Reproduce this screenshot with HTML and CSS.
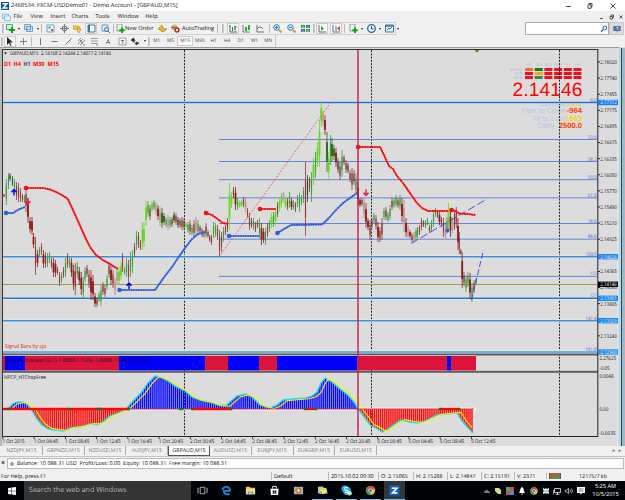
FILE: index.html
```html
<!DOCTYPE html>
<html lang="en">
<head>
  <meta charset="UTF-8">
  <title>2468534: FXCM-USDDemo01 - Demo Account - [GBPAUD,M15]</title>
  <link rel="stylesheet" href="styles.css">
</head>
<body>
  <header class="titlebar">
    <svg class="logo" viewBox="0 0 8 8"><rect width="8" height="8" fill="#0c4da2"/><path d="M1.5 1.8h4.5L2 6h4.7" fill="none" stroke="#fff" stroke-width="1.4"/></svg>
    <span class="title">2468534: FXCM-USDDemo01 - Demo Account - [GBPAUD,M15]</span>
    <svg class="win-controls" viewBox="0 0 50 10"><path d="M0 5.5h5M22 3.8h3v3.5h-3zM23 3.5v-1h3v3.5h-1M44.5 2.5l5 5m0-5l-5 5" fill="none" stroke="#222" stroke-width=".8"/></svg>
  </header>

  <nav class="menubar">
    <svg class="menu-icon" viewBox="0 0 9 8"><rect x=".5" y="1" width="6" height="4.5" fill="#d5ebfa" stroke="#6cabdc" stroke-width=".7"/><rect x="2.5" y="3" width="6" height="4.5" fill="#e9f5fd" stroke="#6cabdc" stroke-width=".7"/></svg>
    <span>File</span><span>View</span><span>Insert</span><span>Charts</span><span>Tools</span><span>Window</span><span>Help</span>
    <svg class="mdi" viewBox="0 0 26 8"><path d="M1 5.5h3M11 3.5h2.5v2.5H11zM12 3.3V2h2.5v2.5h-.8M20.5 2.5l3 3m0-3l-3 3" fill="none" stroke="#444" stroke-width=".9"/></svg>
  </nav>

  <div class="toolbar toolbar-main">
    <div class="tools standard" id="standard"></div>
    <div class="search"><svg viewBox="0 0 8 8"><circle cx="4.8" cy="3" r="2" fill="#e4f0ff" stroke="#3465b5"/><path d="M3.3 4.5L1 7" stroke="#3465b5" stroke-width="1.2"/></svg></div>
    <div class="chat"><svg viewBox="0 0 8 8"><path d="M.3 1h7.4v5H5L3.600 7.600V6H.3z" fill="#5573a8"/><path d="M3.300 2.200h1.400v2.600" stroke="#fff" fill="none" stroke-width=".7"/></svg></div>
  </div>

  <div class="toolbar toolbar-line">
    <div class="tools drawing" id="drawing"></div>
    <div class="periods"><span>M1</span><span>M5</span><span class="on">M15</span><span>M30</span><span>H1</span><span>H4</span><span>D1</span><span>W1</span><span>MN</span></div>
  </div>

  <main class="chart"><svg id="chart" viewBox="0 47 625 399"></svg></main>

  <div class="tabs">
    <span>NZDJPY,M15</span><span>GBPNZD,M15</span><span>NZDUSD,M15</span><span>AUDJPY,M15</span><span class="active">GBPAUD,M15</span><span>AUDUSD,M15</span><span>EURJPY,M15</span><span>EURGBP,M15</span><span>EURUSD,M15</span>
    <i class="tab-scroll">◂&nbsp;&nbsp;&nbsp;▸</i>
  </div>

  <div class="terminal">
    <b>×</b>
    <div class="balance"><i></i><span>Balance: 10 088.31 USD&nbsp; Profit/Loss: 0.00&nbsp; Equity: 10 088.31&nbsp; Free margin: 10 088.31</span></div>
  </div>

  <footer class="status">
    <span>For Help, press F1</span><span>Default</span><span>2015.10.02 09:30</span><span>O: 2.15065</span><span>H: 2.15266</span><span>L: 2.14847</span><span>C: 2.15191</span><span>V: 2371</span>
    <span class="conn"><svg viewBox="0 0 12 6"><path d="M0 0h12v6H0z" fill="#397a2e"/><path d="M0 0h12v2L6 3 0 5z" fill="#a33b2c"/><path d="M2 0v6M4 0v6M6 0v6M8 0v6M10 0v6" stroke="#dfe5d5" stroke-width=".4"/></svg></span>
    <span class="traffic">12175/7 kb</span>
  </footer>

  <div class="taskbar">
    <div class="start"><svg viewBox="0 0 8 8"><path d="M0 1.2L3.5.6v3.1H0zM4 .5L8 0v3.7H4zM0 4.2h3.5v3.2L0 6.900zM4 4.200h4V8l-4-.6z" fill="#fff"/></svg></div>
    <div class="cortana">Search the web and Windows</div>
    <div class="apps">
      <div><svg viewBox="0 0 12 12"><path d="M3.5 2.5h5v7h-5zM2 3.5H1v5h1M10 3.5h1v5h-1" fill="none" stroke="#ddd" stroke-width=".8"/></svg></div>
      <div><svg viewBox="0 0 12 12"><path d="M2.5 6.400h7.200C9.800 3.600 8.200 2 6 2 3.700 2 2 3.300 1.600 5.700M3 6.500c0 4 4.500 4.300 6.300 3" fill="none" stroke="#1b87e0" stroke-width="2"/></svg></div>
      <div><svg viewBox="0 0 12 12"><path d="M1 2h4l1 1h5v7H1z" fill="#f4c95a"/><path d="M1 5h10v5H1z" fill="#fde49a"/><path d="M3 7h6v3H7.500V8.500h-3V10H3z" fill="#4ba7dc"/></svg></div>
      <div><svg viewBox="0 0 12 12"><path d="M1.500 4h9l-.6 7H2.100z" fill="#fff"/><path d="M4 4V1.500h4V4" fill="none" stroke="#fff"/><path d="M4 6h1.800v1.500H4zM6.200 6H8v1.500H6.200zM4 8h1.800v1.500H4zM6.200 8H8v1.500H6.200z" fill="#111"/></svg></div>
      <div><svg viewBox="0 0 12 12"><rect x="1" y="2" width="10" height="8" rx="1" fill="#91b9d6"/><circle cx="6" cy="6" r="3.400" fill="#ef6c18"/><path d="M5 4l3 2-3 2z" fill="#fff"/></svg></div>
      <div class="run"><svg viewBox="0 0 12 12"><path d="M1 2l6-.5.5 5.500-6 1z" fill="#b8d98b"/><path d="M4 4l6-1 1.500 6-6 1z" fill="#f1df79"/><path d="M1 6l4 1v3L1 9z" fill="#97c4df"/></svg></div>
      <div class="run"><svg viewBox="0 0 12 12"><circle cx="4" cy="4" r="3.500" fill="#18aee8"/><circle cx="6.500" cy="6.500" r="4.500" fill="#18aee8"/><path d="M8 3.600C5-.1 2 5.100 5.500 5.600s2.500 3.600-1.300 2" fill="none" stroke="#fff" stroke-width="1.200"/><circle cx="9.300" cy="9" r="2.500" fill="#cce8b7"/></svg></div>
      <div class="run"><svg viewBox="0 0 12 12"><circle cx="6" cy="6" r="5" fill="#f0c32c"/><path d="M6 6L1.700 3.500a5 5 0 0 1 8.900.5z" fill="#db4437"/><path d="M6 6l.2 5A5 5 0 0 1 1.600 3.600z" fill="#2b9b4d"/><circle cx="6" cy="6" r="2.300" fill="#fff"/><circle cx="6" cy="6" r="1.700" fill="#3c7de0"/></svg></div>
      <div class="run current"><svg viewBox="0 0 12 12"><rect x=".5" y=".5" width="11" height="11" fill="#1261c0"/><path d="M3 3.500h5.500L3.800 8.600H9" fill="none" stroke="#fff" stroke-width="1.800"/></svg></div>
    </div>
    <div class="tray">
      <svg viewBox="0 0 8 8"><path d="M1 6h6V4.500L5 4 4 2.500 2.500 3.500 1 4.500z" fill="#777"/></svg>
      <svg viewBox="0 0 8 8"><path d="M1 1h4l2 2v4H4L1 4z" fill="#c4e58c"/></svg>
      <svg viewBox="0 0 8 8"><path d="M0 0h4v4H0z" fill="#4b9f68"/><path d="M4 0h4v4H4z" fill="#d9483f"/><path d="M0 4h4v4H0z" fill="#b15b49"/><path d="M4 4h4v4H4z" fill="#438edb"/></svg>
      <svg viewBox="0 0 8 8"><path d="M4 0C2 1 2.500 4 1 6h6C5.500 4 6 1 4 0zM3 6.500h2L4 8z" fill="#fff"/></svg>
      <svg viewBox="0 0 8 8"><circle cx="4" cy="4" r="3.700" fill="#efc22a"/><path d="M4 4L.8 2a3.700 3.700 0 0 1 6.500.4z" fill="#db4437"/><path d="M4 4v3.700A3.700 3.700 0 0 1 .8 2z" fill="#2b9b4d"/><circle cx="4" cy="4" r="1.600" fill="#3c7de0" stroke="#fff" stroke-width=".5"/></svg>
      <svg viewBox="0 0 8 8"><path d="M1 1l2 1 1-1 1 1 2-1v2L6 4l1 1v2L5 6 4 7 3 6 1 7V5l1-1-1-1z" fill="#e9f6ee"/><path d="M2.500 4h3" stroke="#26a467"/></svg>
      <svg viewBox="0 0 8 8"><path d="M1.500 1.500h6v4h-6zM4.500 5.500v2M2.500 7.300h4M.3 3v4.500" fill="none" stroke="#eee" stroke-width=".8"/></svg>
      <svg viewBox="0 0 8 8"><path d="M.5 3h1.300L3.500 1.500v5L1.800 5H.5zM5 2.500q1 1.500 0 3M6.500 1.500q2 2.500 0 5" fill="none" stroke="#ddd" stroke-width=".7"/></svg>
      <svg viewBox="0 0 8 8"><path d="M0 0h8v6H5L3.500 8V6H0z" fill="#fff"/><path d="M1.500 2h5M1.500 4h5" stroke="#333" stroke-width=".7"/></svg>
    </div>
    <div class="clock"><span>5:25 AM</span><span>10/5/2015</span></div>
  </div>
  <script src="chart.js"></script>
</body>
</html>
```

FILE: styles.css
```css
* { box-sizing: border-box; }
body {
  margin: 0;
  width: 625px;
  height: 500px;
  overflow: hidden;
  display: flex;
  flex-direction: column;
  background: #f0f0f0;
  color: #111;
  font-family: "Open Sans", "Noto Sans", sans-serif;
  font-size: 5.6px;
  line-height: 1;
  white-space: nowrap;
  text-rendering: geometricPrecision;
}
svg { display: block; }

.titlebar {
  height: 11px;
  display: flex;
  align-items: center;
  background: #fff;
  padding: 0 9px 0 1px;
}
.logo { width: 8px; height: 8px; margin-right: 2px; }
.title { font-size: 5.75px; color: #222; }
.win-controls { width: 50px; height: 10px; margin-left: auto; }

.menubar {
  height: 11px;
  display: flex;
  align-items: center;
  padding-left: 2px;
}
.menubar span { flex: none; }
.menubar span:nth-of-type(1) { width: 17px; }
.menubar span:nth-of-type(2) { width: 20px; }
.menubar span:nth-of-type(3) { width: 21px; }
.menubar span:nth-of-type(4) { width: 24px; }
.menubar span:nth-of-type(5) { width: 22px; }
.menubar span:nth-of-type(6) { width: 28px; }
.menu-icon { width: 9px; height: 8px; margin-right: 2.5px; }
.mdi { width: 26px; height: 8px; margin-left: auto; }

.toolbar { display: flex; align-items: stretch; }
.toolbar-main { height: 13px; padding-right: 1px; }
.toolbar-line { height: 12px; }
.tools { display: grid; align-items: center; justify-items: center; border: 1px solid #d2d2d2; border-left: 0; }
.tools svg { width: 9px; height: 9px; }
.tools .pressed { background: #f9f9f9; border: 1px solid #ccc; width: 12px; height: 11px; display: grid; place-items: center; }
.tools .label { justify-self: start; }
.tools .sep { width: 1px; height: 9px; background: #bbb; }
.tools .grip { width: 2px; height: 9px; border-left: 1px solid #bbb; border-right: 1px solid #ccc; }
.tools .drop { border: 1.5px solid transparent; border-top: 2px solid #222; border-bottom: 0; }
.standard {
  width: 396px;
  grid-template-columns: 5px 11px 5px 14px 5px 3px 14px 14px 13px 14px 14px 3px 10px 31px 13px 13px 34px 3px 7px 14px 13px 15px 3px 13px 14px 14px 3px 14px 14px 3px 14px 4px 14px 4px 14px 4px;
}
.search {
  width: 84px;
  margin-left: 129px;
  background: #fff;
  border: 1px solid #aaa;
  display: flex;
  align-items: center;
  justify-content: flex-end;
}
.search svg { width: 8px; height: 8px; }
.chat { flex: 1; display: grid; place-items: center; background: #dcdcdc; border: 1px solid #c8c8c8; }
.chat svg { width: 8px; height: 8px; }
.drawing {
  width: 150px;
  border: 0;
  grid-template-columns: 3px 13px 14px 3px 14px 14px 14px 13px 13px 14px 14px 13px 5px 3px;
}
.periods { display: flex; align-items: center; width: 126px; border-right: 1px solid #c5c5c5; font-size: 4.8px; color: #444; }
.periods span { flex: 1; text-align: center; }
.periods .on { background: #fafafa; border: 1px solid #ccc; padding: 2px 0; }

.chart { height: 399px; flex: none; }
.chart svg { width: 625px; height: 399px; }

.tabs { height: 10px; display: flex; align-items: flex-start; padding: 0 4px 0 1px; color: #777; font-size: 5.2px; }
.tabs span { height: 9px; width: 41.8px; flex: none; display: grid; place-items: center; border-right: 1px solid #aaa; }
.tabs .active { height: 10px; background: #fff; color: #111; border: 1px solid #555; border-top: 0; }
.tab-scroll { margin-left: auto; font-style: normal; line-height: 8px; }

.terminal { height: 14px; display: flex; align-items: center; padding: 1px; border-top: 1px solid #c5c5c5; }
.terminal b { width: 6px; font-size: 7px; }
.balance { flex: 1; height: 11px; display: flex; align-items: center; background: #fff; border: 1px solid #bbb; padding-left: 2px; font-size: 5.45px; }
.balance i { width: 4px; height: 4px; margin-right: 3px; border: 1px solid #888; border-radius: 50%; background: #ccc; }

.status { height: 11px; display: flex; align-items: center; padding-left: 1px; background: #f0f0f0; font-size: 5.4px; }
.status span { flex: none; border-left: 1px solid #bbb; padding-left: 2px; line-height: 8px; }
.status span:nth-child(1) { width: 270px; border: 0; padding-left: 0; }
.status span:nth-child(2) { width: 57px; }
.status span:nth-child(3) { width: 50px; }
.status span:nth-child(4) { width: 35px; }
.status span:nth-child(5), .status span:nth-child(6) { width: 34px; }
.status span:nth-child(7) { width: 33px; }
.status span:nth-child(8) { width: 32px; }
.conn { width: 31px; }
.conn svg { width: 12px; height: 6px; }
.status .traffic { border: 0; }

.taskbar { height: 19px; display: flex; background: #000407; color: #fff; }
.start { width: 24px; display: grid; place-items: center; }
.start svg { width: 8px; height: 8px; }
.cortana { width: 167px; background: #343434; color: #b4b4b4; font-size: 7.1px; line-height: 18px; padding-left: 5px; }
.apps { display: flex; gap: 3px; padding-left: 1px; }
.apps div { width: 21px; display: grid; place-items: center; border-bottom: 1px solid transparent; }
.apps svg { width: 11px; height: 11px; }
.apps .run { border-bottom-color: #78bbea; }
.apps .current { background: #30363b; }
.tray { display: flex; align-items: center; gap: 3.8px; margin-left: auto; }
.tray svg { width: 8px; height: 8px; }
.clock { width: 39px; display: flex; flex-direction: column; align-items: center; justify-content: center; gap: 2px; margin-left: 1px; font-size: 5.6px; }

#chart text { font-family: "Open Sans", "Noto Sans", sans-serif; font-size: 5.3px; fill: #111; }
#chart .axis { font-size: 5.2px; }
#chart .fib { fill: #4a66cf; font-size: 5px; }
#chart .tf { fill: #f00; font-size: 6px; font-weight: 700; }
#chart .info { fill: #b4c6de; font: 7.6px "Liberation Sans", sans-serif; }
#chart .val { font-weight: 700; }
#chart .head { fill: #a9bad1; font-size: 4.2px; }
#chart .big { fill: #f00; font: 19.2px "Liberation Sans", sans-serif; }
```

FILE: chart.js
```js
// small toolbar icons, 9x9
const art = {
  add: '<path d="M.5.5h6v5h-6z" fill="#d6eed2" stroke="#4a9"/><path d="M6 3v6M3 6h6" stroke="#0aa51c" stroke-width="2"/>',
  profile: '<path d="M.5.5h6v5h-6zM2.5 2.5h6v5h-6z" fill="#cfe0ee" stroke="#5d8fb8" stroke-width=".8"/>',
  watch: '<path d="M1 1h7v7H1z" fill="#eef8ff" stroke="#6aa0cc"/><path d="M2.5 3.5h2" stroke="#1a3" stroke-width="2"/><path d="M5 6h2" stroke="#d43" stroke-width="2"/>',
  target: '<circle cx="4.5" cy="4.5" r="2.5" fill="none" stroke="#666"/><path d="M4.5 0v9M0 4.5h9" stroke="#666" stroke-width=".8"/>',
  folder: '<path d="M.5 1.5h3l.5 1h3v3h-6.5z" fill="#f2c94c" stroke="#b98b18" stroke-width=".5"/><path d="M4 3l1.5 2 3 .5-2 1.5.3 2L4.5 8z" fill="#f8d84e" stroke="#a98013" stroke-width=".5"/>',
  nav: '<path d="M1 1h7v7H1z" fill="#fff" stroke="#3277ad"/><path d="M1 1h2v7H1z" fill="#3277ad"/>',
  tester: '<path d="M1 1h6v6H1z" fill="#e4f1fb" stroke="#6896bd"/><circle cx="5.5" cy="5.5" r="2" fill="#cae4fa" stroke="#476fa2"/><path d="M7 7l2 2" stroke="#476fa2"/>',
  order: '<path d="M1 0h5v7H1z" fill="#f3f7ef" stroke="#777" stroke-width=".7"/><path d="M6 3.5V9M3.2 6.2h5.6" stroke="#0aa51c" stroke-width="2"/>',
  meta: '<path d="M0 5l4-4 1.5 3.5L9 5 5 8z" fill="#e7b52f" stroke="#ac7b15" stroke-width=".6"/>',
  auto: '<circle cx="3.5" cy="3.5" r="3" fill="#edb53b"/><path d="M0 3.5h6" stroke="#467cbc" stroke-width="1.5"/><circle cx="6" cy="6" r="2.7" fill="#d42b20"/><path d="M5 5h2v2H5z" fill="#fff"/>',
  bars: '<path d="M1 1v7h7M1 2l-1 1M3.5 3v4M6 1.5v5M6 3h1.5" fill="none" stroke="#4c6b55"/><path d="M6 2v4" stroke="#18a32c"/>',
  candle: '<path d="M1 1v7h7" fill="none" stroke="#67816c"/><path d="M3 3h2v4H3zM6 1h2v5H6z" fill="#1db237"/>',
  line: '<path d="M1 1v7h7M1 5q3-4 6 0" fill="none" stroke="#587767"/>',
  zin: '<circle cx="3.5" cy="3.5" r="2.8" fill="#e2f1ff" stroke="#2977b9"/><path d="M2 3.5h3M3.5 2v3" stroke="#2b75ba"/><path d="M6 6l2.5 2.5" stroke="#c99b25" stroke-width="2"/>',
  zout: '<circle cx="3.5" cy="3.5" r="2.8" fill="#e2f1ff" stroke="#2977b9"/><path d="M2 3.5h3" stroke="#2b75ba"/><path d="M6 6l2.5 2.5" stroke="#c99b25" stroke-width="2"/>',
  tile: '<path d="M0 1h4v3H0zM5 5h4v3H5z" fill="#3aa33a"/><path d="M5 1h4v3H5zM0 5h4v3H0z" fill="#3768a9"/><path d="M1 3h2M6 3h2M1 7h2M6 7h2" stroke="#fff" stroke-width=".7"/>',
  scroll: '<path d="M1 1v7h7" fill="none" stroke="#666"/><path d="M3 2l3 2.5L3 7z" fill="#2ca23b"/>',
  shift: '<path d="M1 1v7h7M4 2v5" fill="none" stroke="#5b7b78"/><path d="M8 2L5 4.5 8 7z" fill="#c54b35"/>',
  clock: '<circle cx="4.5" cy="4.5" r="3.8" fill="#f5faff" stroke="#2267b4" stroke-width="1.3"/><path d="M4.5 2v3h2" fill="none" stroke="#446"/>',
  template: '<path d="M.5 1h8v7h-8z" fill="#e8f4ff" stroke="#3b73a7"/><path d="M.5 2h8" stroke="#3b73a7" stroke-width="1.5"/><path d="M2 6l2-2 1 1 2-2" fill="none" stroke="#299a4d"/>',
  cursor: '<path d="M2 0v8l2-2 1.5 3 1-.5L5 5.5h3z" fill="#222"/>',
  cross: '<path d="M4.5 1v7M1 4.5h7" stroke="#666" stroke-width=".8"/>',
  vert: '<path d="M4.5 1v7" stroke="#555" stroke-width=".8"/>',
  horz: '<path d="M1.5 4.5h6" stroke="#555" stroke-width=".8"/>',
  trend: '<path d="M1.5 7.5l6-6" stroke="#555" stroke-width=".8"/>',
  channel: '<path d="M1 7l5-5M3 8l5-5M1 4l3-3M3 3l3 4M6 8h2" stroke="#555" stroke-width=".7"/>',
  fibo: '<path d="M1 1.5h7M1 4h7M1 6.5h6M7 6v3" stroke="#777" stroke-width=".7"/>',
  textA: '<text x="2" y="7" font-size="6.5" fill="#333">A</text>',
  textT: '<path d="M1 1h7v7H1z" fill="none" stroke="#888" stroke-width=".7"/><text x="2.9" y="6.6" font-size="5.5" fill="#222">T</text>',
  shapes: '<path d="M0 3l2.5-2L4 3.5 2.5 5zM5 5l3 1-3 2zM3 5l2 2" fill="#333" stroke="#333" stroke-width=".7"/>'
};

function fillTools(id, list) {
  document.getElementById(id).innerHTML = list.split(' ').map(n => {
    if (['grip', 'sep', 'drop'].includes(n)) return `<i class="${n}"></i>`;
    if (n === 'new') return '<span class="label">New Order</span>';
    if (n === 'trading') return '<span class="label">AutoTrading</span>';
    const on = n[0] === '*';
    return `<span class="${on ? 'pressed' : ''}"><svg viewBox="0 0 9 9">${art[n.replace('*', '')]}</svg></span>`;
  }).join('');
}
fillTools('standard', 'grip add drop profile drop sep watch target folder *nav tester sep order new meta auto trading sep grip *bars candle line sep zin zout tile grip *scroll *shift sep order drop clock drop template drop');
fillTools('drawing', 'grip *cursor cross sep vert horz trend channel fibo textA textT shapes drop grip');

let out = '';
const rect = (x, y, w, h, c) => { out += `<rect x="${x}" y="${y}" width="${w}" height="${h}" fill="${c}"/>`; };
const line = (x1, y1, x2, y2, c, w = 1, extra = '') => { out += `<path d="M${x1} ${y1}L${x2} ${y2}" stroke="${c}" stroke-width="${w}" fill="none" ${extra}/>`; };
const text = (x, y, s, cls = '', extra = '') => { out += `<text x="${x}" y="${y}" class="${cls}" ${extra}>${s}</text>`; };
const poly = (pts, c, w, extra = '') => { out += `<polyline points="${pts}" fill="none" stroke="${c}" stroke-width="${w}" ${extra}/>`; };
const fit = w => `textLength="${w}" lengthAdjust="spacingAndGlyphs"`;

// frame
rect(0, 47, 625, 399, '#dcdcdc');
rect(0, 47, 619, 1, '#999');
rect(0, 48, 2, 398, '#b8b8b8');
rect(2, 49, 1, 388, '#333');
rect(2, 49, 596, 1, '#333');
rect(617.5, 48, 1, 398, '#eee');
rect(618.5, 48, 2.5, 398, '#b9d7ec');
rect(621, 48, 1.2, 398, '#0b5368');
rect(622.2, 48, 2.8, 398, '#a9b5bc');

// price info, behind the lines
text(540, 106.2, 'Spread', 'info', fit(25));
text(521.5, 113.2, 'Pips to Open', 'info', fit(44));
text(533.5, 121, 'Hi to Low', 'info', fit(31));
text(537.5, 128, 'Daily', 'info', fit(17));
text(582, 106.2, '20.0', 'info val', 'text-anchor="end" style="fill:#ffd21e"');
text(582, 113.2, '-964', 'info val', 'text-anchor="end" style="fill:#ff3b00"');
text(582, 121, '1863', 'info val', 'text-anchor="end" style="fill:#ffd21e"');
text(582, 128, '2500.0', 'info val', 'text-anchor="end" style="fill:#ff3b00"');
text(512.5, 96, '2.14146', 'big', 'textLength="70"');
['M1', 'M5', 'M15', 'M30', 'H1', 'H4'].forEach((t, i) => {
  text(529 + i * 9.7, 66, t, 'head', `text-anchor="middle" ${fit(t.length * 2.5)}`);
  const cols = [['#ff6347', '#f01020', '#f01020'], ['#108010', '#ffa014', '#2e8b57']][i] || ['#f01020', '#f01020', '#f01020'];
  cols.forEach((c, r) => rect(525 + i * 9.7, 68 + r * 4, 8, 3, c));
});
['MACD', 'STR', 'EMA'].forEach((t, r) => text(522, 71.2 + r * 4, t, 'head', 'text-anchor="end"'));

// day separators
[184.5, 371.5, 559.5].forEach(x => line(x, 50, x, 436, '#222', 1, 'stroke-dasharray="2 1.3"'));

// fibo and price levels
[[139.5, '23.6'], [161.5, '38.2'], [179.7, '50.0'], [197.9, '61.8'], [223.5, '78.6'], [239.2, '88.6'], [276.4, '113']].forEach(([y, t]) => {
  line(219, y, 597, y, '#6684d8', 1);
  text(596.5, y - 1, t, 'fib', `text-anchor="end" ${fit(t.length * 2.2)}`);
});
[[102.5, '#176fe6', '0.0', 1.4], [256.7, '#3590e8', '100.0', 1.4], [298.3, '#147bdf', '127', 1.4], [320.7, '#3694ec', '141.4', 1.4], [352, '#65b1ed', '161.8', 2]].forEach(([y, c, t, w]) => {
  line(3, y, 597, y, '#efe5d2', w + 1.6);
  line(3, y, 597, y, c, w);
  text(596.5, y - 1, t, 'fib', `text-anchor="end" ${fit(t.length * 2.2)}`);
});
line(3, 284.5, 597, 284.5, '#9b9b52');

// bars: x high low colour
const bars = `6.3 179 205 g,8.5 173 189 g,10 173 181 b,12.5 176 186 b,14.5 179 190 g,16.5 182 200 m,18.5 183 202 m,20.5 188 202 m,22.5 194 202 m,24.5 195 203 g,26 188 212 m,28 198 223 M,30 217 233 M,32 217 235 M,33.5 233 248 M,35.5 237 275 m,37.5 250 267 M,39.5 247 257 g,41.5 243 255 m,43.5 250 268 M,45.5 252 268 m,47.5 253 267 g,49.5 252 263 g,51.5 258 268 m,53.5 258 277 M,55.5 260 277 M,57.5 267 275 m,59.5 272 286 m,61.5 272 283 g,63.5 267 278 m,65.5 258 277 g,67.5 253 268 m,69.5 257 268 g,71.5 258 277 M,73.5 265 290 M,75.3 263 295 m,77.3 262 278 g,79.3 267 285 M,81.3 272 295 M,83.3 277 298 g,85 267 282 g,87 265 277 m,89 270 288 m,91 270 300 M,93 275 300 M,95 293 307 M,97 297 307 m,99 292 302 g,101 285 306 g,103 282 295 m,105 285 297 m,107 275 290 g,109 262 278 m,111 265 285 M,113 270 288 m,115 278 295 p,117 268 285 p,119 267 285 l,121 262 280 l,122.5 253 272 m,124.5 267 275 g,126.5 258 277 g,128.5 260 282 m,130.5 252 277 g,132.5 250 273 g,134.5 243 257 m,136.5 231 250 g,138.5 232 248 m,140.5 240 250 m,142.5 222 250 l,144 223 247 l,146 201 226 l,148 201 217 g,150 205 220 m,152 201 212 l,154 200 210 g,156 202 215 p,158 205 220 M,160 207 226 p,162 208 228 B,164 213 225 B,166 217 227 g,168 215 230 p,170 217 228 g,172 217 227 m,174 212 223 B,176 213 225 m,178 217 228 b,180 218 228 m,182 217 230 m,184 218 230 m,186 222 228 l,188 222 233 g,190 220 235 m,192 225 235 g,194 220 237 m,196 217 235 p,198 220 235 g,200 225 233 m,202 228 237 m,204 230 238 g,206 223 237 m,208 230 238 m,209.7 235 242 m,211.5 235 245 m,213.5 222 238 g,215.5 223 237 g,217.5 225 240 m,219.5 230 257 m,221.5 232 252 m,223.5 227 242 g,225.5 225 235 m,227.5 218 232 m,229.5 183 230 l,231.5 192 208 l,233.5 187 198 m,235.5 187 210 M,237.5 198 210 g,239.5 200 208 l,241.5 200 207 l,243.5 197 207 m,245.5 198 212 p,247.5 208 218 m,249.5 213 230 m,251.5 218 228 m,253.5 218 230 g,255.5 222 232 m,257.5 220 228 m,259.5 218 238 g,261.5 223 245 M,263.5 228 243 M,265.5 228 245 g,267.5 223 237 m,269.5 220 232 g,271.5 213 228 l,273.5 212 227 g,275.5 208 225 l,277.5 202 217 m,279.5 198 212 l,281.5 193 207 l,283.5 192 202 p,285.5 198 208 l,287.5 198 210 m,289.5 192 208 g,291.5 198 210 M,293.5 200 210 g,295.5 202 212 m,297.5 195 207 g,299.5 193 212 g,301.5 195 205 g,303.5 187 203 g,305.5 162 236 m,307.5 175 202 b,309.5 177 192 m,311.5 172 202 g,313.5 158 185 l,315.5 152 178 g,317.5 142 167 l,319.5 120 167 l,321.3 102 127 l,323 111 126 p,325 115 135 M,327 132 172 B,328.7 152 178 l,330.5 135 165 g,332 138 162 B,334 145 160 B,336 148 167 M,338 158 173 b,340 162 180 m,342 150 177 g,344 155 165 m,346 160 173 m,348 163 173 b,350 170 182 m,352 168 190 m,354 170 185 m,356 173 195 g,358 182 205 M,360 198 207 M,362 198 206 m,364 198 218 p,366 203 228 M,368 218 230 M,370 220 240 m,372 218 228 m,374 213 223 g,376 215 230 m,378 222 242 M,380 227 242 m,382 218 240 m,384 208 220 g,386 207 220 m,388 212 222 g,390 205 220 g,392 198 210 m,394 198 208 g,396 195 207 g,398 198 208 m,400 195 210 g,402 198 222 M,404 200 232 p,406 218 237 M,408 225 238 p,410 230 238 M,412 233 242 m,414 232 243 p,416 228 240 g,417.5 227 238 g,419.5 225 235 m,421.5 218 230 m,423.5 220 227 m,425.5 220 228 g,427.5 218 225 g,429.5 225 233 m,431.5 220 232 g,433.5 210 227 g,435.5 208 217 g,437.5 210 218 m,439.5 212 225 M,441.5 217 227 m,443.5 218 237 m,445.5 223 239 p,447 217 233 g,448.5 203 232 l,450.5 210 237 M,452.5 218 233 p,454.5 210 230 m,456.3 207 228 m,458 218 250 M,459.3 232 254 m,460.8 249 255 m,462.2 252 288 M,464 272 286 m,466 275 292 g,468 272 287 g,470 273 299 M,472 283 302 g,474 280 293 m,476 278 285 g`;
const colors = { g: '#3a9c3c', l: '#62d91c', m: '#8c3a3a', M: '#8c1c1c', b: '#2b4a24', B: '#2c6416', p: '#c29c98' };
bars.split(',').forEach(b => {
  const [x, hi, lo, c] = b.split(' ');
  const h = lo - hi;
  line(x, hi, x, lo, colors[c], c === 'p' ? 1.2 : .8);
  const w = 'MBlp'.includes(c) ? 1.8 : 1.15;
  rect(x - w / 2, +hi + h * .25, w, h * .5, colors[c]);
});

// trend lines
line(219, 257, 331, 102, '#ed4545', .8, 'stroke-dasharray="2 1.5"');
line(411, 243.5, 487, 199, '#3c3cdf', .9, 'stroke-dasharray="8 3"');
line(471.5, 300, 483.5, 250, '#3c3cdf', .9, 'stroke-dasharray="6 2.5"');

// stop dots
const dots = 'stroke-linecap="round" stroke-linejoin="round" stroke-dasharray=".1 2.3"';
const trail = (pts, c) => {
  poly(pts, c, .8);
  poly(pts, c, 2.2, dots);
  const [x, y] = pts.split(' ')[0].split(',');
  out += `<circle cx="${x}" cy="${y}" r="2.3" fill="${c}"/>`;
};
const red = '#fa0c0c', blue = '#2f5fdc';
trail('26,188 43,188 50,189.5 56,192 62,195 68,199 73,210 78,221 86,239 90,247 96,255 103,260 110,264 118,269', red);
trail('206,213 212,215 219,220 223,223 228,224', red);
trail('260,209 276,209', red);
trail('358,147 380,147 384,155 389,166 393,169 397,176 403,183 410,193 417,203 422,208 428,211 448,211', red);
trail('451.5,210 456,211 459,213.5 468,214 475,215', red);
trail('6,213 13,213 16,211 20,209 25,207', blue);
trail('119.5,290 155,290 160,283 165,276 172,267 178,258 185,248 192,239 198,234 205,232', blue);
trail('229,236 259,236', blue);
trail('277.5,233 284,229 291,225 322,224.5 329,218 335,211 343,203 350,198 357,193', blue);
out += '<circle cx="447.5" cy="230.5" r="2" fill="#2f5fdc"/><circle cx="3.8" cy="195.5" r="1.3" fill="#f22"/>';

const arrow = (x, y, c, d) => { out += `<path d="M${x} ${y + 3 * d}V${y - 3 * d}M${x - 2.5} ${y - .3 * d}L${x} ${y - 3 * d}L${x + 2.5} ${y - .3 * d}" stroke="${c}" stroke-width="1.4" fill="none"/>`; };
arrow(14, 192.5, '#0000e8', 1);
arrow(129, 286, '#0000e8', 1);
arrow(28, 201, '#d81c46', -1);
arrow(366, 192.5, '#d81c46', -1);
out += '<path d="M474.5 50h5l-2.5 2.5z" fill="#77770c"/><path d="M4 52.5h3l-1.5 2z" fill="#111"/>';

text(10, 55.2, 'GBPAUD,M15&#160; 2.14168 2.14244 2.14077 2.14146', '', fit(101));
[[4, 'D1', 7], [13.5, 'H4', 7.5], [23.5, 'H1', 7], [33, 'M30', 11.5], [47.5, 'M15', 11.5]].forEach(([x, t, w]) => text(x, 65.7, t, 'tf', fit(w) + (t === 'H1' ? ' style="fill:#444"' : '')));
text(5, 347.5, 'Signal Bars by cja', '', 'style="fill:#ed2020;font-size:5.6px" ' + fit(41));

// signal band
rect(3, 353.5, 595, 2, '#5a5a5a');
rect(3, 355.5, 473, 1, '#ddd');
[[3, 5, 0], [5, 25, 1], [25, 119, 0], [119, 205, 1], [205, 228, 0], [228, 259, 1], [259, 277, 0], [277, 357.5, 1], [357.5, 447, 0], [447, 451, 1], [451, 476, 0]].forEach(([a, b, up]) => rect(a, 356, b - a, 14.5, up ? '#0000fa' : '#dc143c'));
text(5, 361.5, 'Deep Bar Indicator (33.1) -1.00000 2.15358 -1.00000 -1.00000 2.15358', '', 'style="fill:#100828;font-size:5px" ' + fit(143));
rect(3, 370.8, 595, 2, '#606060');

// oscillator
const osc = [[3, 409], [8, 409], [13, 403.5], [18, 402], [22, 402], [27, 404], [31, 409], [37, 419], [42, 425], [48, 429], [55, 430], [64, 431], [70, 428], [80, 427], [90, 424], [98, 424.5], [104, 421], [110, 416], [118, 413], [126, 409], [133, 401], [141, 393], [148, 383], [155, 376], [160, 377], [168, 381], [175, 386], [185, 391], [192, 397], [200, 400], [210, 402], [218, 405], [226, 405.5], [231, 401], [237, 396], [245, 394], [252, 397], [260, 405], [270, 408], [277, 405], [283, 400], [293, 399], [305, 398], [312, 396], [317, 392], [321, 383], [325, 378], [332, 382], [340, 389], [348, 395], [354, 402], [358, 409], [365, 418], [370, 425], [376, 428], [382, 432], [388, 429], [395, 424], [401, 420], [410, 422], [418, 423], [425, 421], [431, 418], [437, 415], [446, 414], [457, 413], [462, 421], [468, 428], [473, 433]];
line(3, 409, 476, 409, '#eee', 3);
for (let x = 4; x < 474; x += 1.95) {
  const i = osc.findIndex(p => p[0] > x);
  if (i < 1) continue;
  const [a, b] = [osc[i - 1], osc[i]];
  const y = a[1] + (b[1] - a[1]) * (x - a[0]) / (b[0] - a[0]);
  line(x, 409, x, y, y < 409 ? '#0808ff' : '#ff0c0c', 1.45);
}
poly(osc.join(' '), '#10e2ef', 1.3);
poly(osc.slice(0, -1).map(p => [p[0] + 4, p[1] + (p[1] < 409 ? .7 : -.5)]).join(' '), '#fff000', 1.1);
line(3, 409, 474, 409, '#db2030', .8);
[[3, 129], [192, 231], [305, 316], [440, 459]].forEach(([a, b]) => line(a, 409, b, 409, '#ff0505', 2.3));
[8, 69, 98, 100, 129, 180, 182, 192, 231, 305, 316, 440, 459].forEach(x => rect(x - 1.2, 407.8, 2.4, 2.4, '#087e14'));
text(4, 379, 'NPCP_HTChopFree', '', fit(42));
line(358, 50, 358, 436, '#c81d48', 1.4);

// axes
rect(597.3, 49, 1, 388, '#222');
rect(3, 436, 595, 1, '#222');
['2.18020', '2.17740', '2.17455', '2.17175', '2.16895', '2.16615', '2.16335', '2.16050', '2.15770', '2.15490', '2.15210', '2.14925', '', '2.14365', '2.14085', '2.13805', '', '2.13240'].forEach((t, i) => {
  const y = 62 + i * 16.11;
  rect(598, y - .5, 2, 1, '#222');
  if (t) text(600.3, y + 1.9, t, 'axis', fit(16.5));
});
const tag = (y, t, c) => {
  rect(598, y - 2.7, 20, 5.4, c);
  text(600.3, y + 1.9, t, 'axis', 'style="fill:#e5f2ff" ' + fit(16.5));
};
tag(102.5, '2.17312', '#1a80ef');
tag(256.7, '2.14626', '#2587ea');
tag(284.3, '2.14146', '#000');
tag(298.3, '2.13901', '#1689ee');
tag(320.7, '2.13509', '#1689ee');
tag(352, '2.12960', '#258fe8');
[[358, '2.27625', 16.5], [368.5, '-0.05', 10], [376, '0.0048', 14], [409, '0.00', 9], [433, '-0.0035', 16]].forEach(([y, t, w]) => text(599.5, y + 1.9, t, 'axis', fit(w)));
['1 Oct 2015', '1 Oct 04:45', '1 Oct 08:45', '1 Oct 12:45', '1 Oct 16:45', '1 Oct 20:45', '2 Oct 00:45', '2 Oct 04:45', '2 Oct 08:45', '2 Oct 12:45', '2 Oct 16:45', '2 Oct 20:45', '5 Oct 00:45', '5 Oct 04:45', '5 Oct 08:45', '5 Oct 12:45'].forEach((t, i) => {
  const x = 2.5 + i * 31.23;
  rect(x, 437, .8, 2, '#222');
  text(x, 442.7, t, 'axis', fit(i ? 24.5 : 22));
});
document.getElementById('chart').innerHTML = out;
```
